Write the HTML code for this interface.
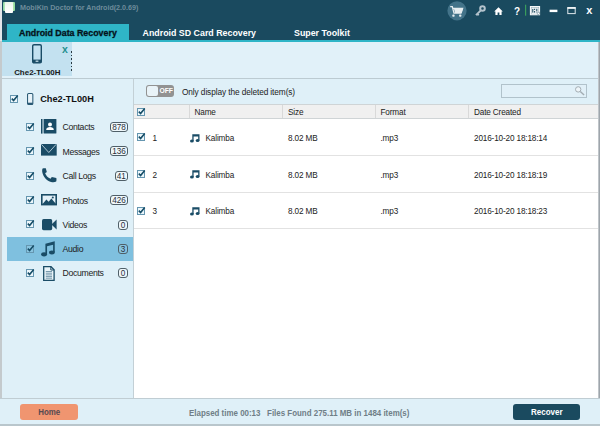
<!DOCTYPE html>
<html><head><meta charset="utf-8">
<style>
*{margin:0;padding:0;box-sizing:border-box}
html,body{width:600px;height:426px;overflow:hidden;background:#fff}
body{font-family:"Liberation Sans",sans-serif;font-size:8px;color:#222;position:relative}
.abs{position:absolute}
svg{position:absolute;overflow:visible}
#title{left:0;top:0;width:600px;height:40px;background:#1a4a5f}
#tabline{left:0;top:39.8px;width:600px;height:1.9px;background:#2fb5c7}
#ttext{left:20px;top:2.5px;font-size:7.15px;font-weight:bold;color:#6e8c9b;line-height:11px;white-space:nowrap}
#logo{left:3.1px;top:1.9px;width:12.1px;height:11.2px}#logo i{position:absolute;left:0;top:0;width:12.1px;height:9.4px;background:linear-gradient(to right,#86d6a0 0,#b9e8bd 16%,#e6f6e4 30%,#f4fbf2 50%,#dff3dd 70%,#a9e4ae 86%,#8fdc95 100%);border-radius:1px}#logo b{position:absolute;left:1.9px;top:0.4px;width:8.4px;height:10.8px;background:linear-gradient(to bottom,#eaf6e8 0,#f7fbf6 40%,#ffffff 100%);border-radius:1px}
.tab{top:24.5px;height:16px;font-size:8.85px;font-weight:bold;line-height:16px;color:#fff;white-space:nowrap}
#tab1{left:6.6px;top:23.7px;width:122.4px;height:17px;background:#2fb5c7}
#strip{left:0;top:41.6px;width:600px;height:36.4px;background:#e1f1f9}
#dev{left:1.5px;top:41.6px;width:70.5px;height:34.8px;background:#c3e1f0}
#devdots{left:71px;top:50.7px;height:20.2px;width:1.2px;background:repeating-linear-gradient(to bottom,#2a3a42 0,#2a3a42 1.8px,transparent 1.8px,transparent 3.67px)}
#devname{left:2px;top:68px;width:70.6px;text-align:center;font-size:7.95px;font-weight:bold;color:#1a1a1a;line-height:10px}
#devx{left:62px;top:43.3px;font-size:10.5px;font-weight:bold;color:#24908f;line-height:12px}
#stripline{left:0;top:78px;width:600px;height:1px;background:#bccbd2}
#side{left:1.3px;top:79px;width:131.7px;height:319px;background:#dff0f8}
#sideline{left:133px;top:79px;width:1px;height:319px;background:#c3d0d6}
#main{left:134px;top:79px;width:466px;height:25px;background:#dff0f8}
#bottom{left:0;top:398px;width:600px;height:28px;background:#dff0f8;border-top:1px solid #c0cdd3;border-bottom:2px solid #b9c6cc}
#lb{left:0;top:0;width:1.6px;height:426px;background:linear-gradient(to bottom,#e3e6ea 0,#e3e6ea 41px,#c4cacd 41px,#c4cacd 100%)}
#rb{left:597.6px;top:41.6px;width:2.4px;height:385px;background:linear-gradient(to right,#d5dadd,#a0a7ad 60%,#9aa1a7)}
.cb{width:8px;height:8px;border:1px solid #6596b0;background:#ebf6fb}
.item{left:62.6px;font-size:8.7px;letter-spacing:-0.33px;color:#222;line-height:10px;white-space:nowrap}
.cnt{height:10px;border:1px solid #4f5f68;border-radius:3px;font-size:8.2px;line-height:10px;text-align:center;color:#2a2f3a;background:#eef7fb;right:472px}
#sel{left:7.3px;top:236.8px;width:125.7px;height:23.9px;background:#7fc0df}
#thead{left:134px;top:104px;width:464px;height:15.2px;background:#f0f0f0;border-top:1px solid #cfd4d6;border-bottom:1px solid #cfd4d6}
.th{top:108.3px;font-size:8.2px;letter-spacing:-0.15px;line-height:10px;color:#222;white-space:nowrap}
.vsep{top:105px;width:1px;height:13px;background:#d9d9d9}
.td{font-size:8.2px;letter-spacing:-0.15px;line-height:10px;color:#222;white-space:nowrap}
.hl{left:134px;width:464px;height:1px;background:#e2e2e2}
#home{left:20px;top:404.2px;width:58px;height:15.8px;background:#f09570;border-radius:3px;font-size:8.8px;font-weight:bold;color:#584a50;text-align:center;line-height:17.6px}#home span{display:inline-block;transform:scaleX(0.9)}
#recover{left:513px;top:404.3px;width:66.7px;height:15.4px;background:#1a4a5f;border-radius:3px;font-size:8.5px;font-weight:bold;color:#fff;text-align:center;line-height:16.6px}#recover span{display:inline-block;transform:scaleX(0.94)}
#status{left:189px;top:408px;font-size:8.3px;font-weight:bold;color:#6f7e87;line-height:10px;white-space:pre;transform:scaleX(0.956);transform-origin:0 50%}
#toggle{left:145.5px;top:85px;width:28.5px;height:12px;background:#929292;border-radius:3px}
#knob{left:146.7px;top:86px;width:11.5px;height:10px;background:#e9f3f8;border-radius:2px}
#off{left:159.6px;top:87px;font-size:6.8px;letter-spacing:-0.2px;font-weight:bold;color:#fff;line-height:8px}
#only{left:182px;top:87.4px;font-size:8.3px;letter-spacing:-0.1px;line-height:10px;color:#222;white-space:nowrap}
#search{left:501px;top:84.3px;width:86px;height:14px;border:1px solid #b1c2cb;background:#e1f0f8}
.ic{fill:#1a4c66}
</style></head><body>
<div class="abs" id="title"></div>
<div class="abs" id="logo"><i></i><b></b></div>
<div class="abs" id="ttext">MobiKin Doctor for Android(2.0.69)</div>
<div class="abs tab" id="tab1"></div>
<div class="abs tab" style="left:19px;color:#04121a;-webkit-text-stroke:0.3px #04121a">Android Data Recovery</div>
<div class="abs tab" style="left:142.5px">Android SD Card Recovery</div>
<div class="abs tab" style="left:294px">Super Toolkit</div>
<div class="abs" id="tabline"></div>
<!-- title icons -->
<svg class="abs" style="left:0;top:0" width="600" height="24" viewBox="0 0 600 24">
<circle cx="457" cy="10.8" r="9.6" fill="#437389"/>
<path d="M450.2 6.700h2.100l1.700 6.500h7l1.600-4.800h-9.400" fill="none" stroke="#e6edf0" stroke-width="1.300"/>
<path d="M453.800 8.200h9.300l-1.500 4.700h-6.600z" fill="#e6edf0"/>
<rect x="452.300" y="14.600" width="2.300" height="2.100" rx="0.700" fill="#e6edf0"/><rect x="459.100" y="14.600" width="2.300" height="2.100" rx="0.700" fill="#e6edf0"/>
<circle cx="482.500" cy="8.500" r="2.300" fill="none" stroke="#b4c3cd" stroke-width="2"/>
<path d="M480.600 10.600l-4.600 4.500M477.400 13.900l1.300 1.300" stroke="#b4c3cd" stroke-width="2" fill="none"/>
<path d="M494.2 11.4l4.3-4.2 4.3 4.2h-1.2v3.6h-2.2v-2.4h-1.8v2.4h-2.2v-3.6z" fill="#fff"/>
<text x="514" y="15.200" font-size="10" font-weight="bold" fill="#fff" font-family="Liberation Sans, sans-serif">?</text>
<rect x="525" y="4.7" width="1.2" height="11" fill="#3a9c5c"/>
<rect x="531.200" y="7.300" width="7.600" height="6.800" fill="#e9eff2"/>
<path d="M532.800 9v3.600M534.600 8.800v1.200M534.600 11v1.600M536.800 8.800v2.600" stroke="#1a4a5f" stroke-width="1"/>
<rect x="530.500" y="6.600" width="9" height="8.100" fill="none" stroke="#f4f7f8" stroke-width="1.200"/>
<path d="M536.600 12.300h3.600l-1.800 3z" fill="#fff" stroke="#1a4a5f" stroke-width="0.400"/>
<rect x="549.6" y="9.7" width="7.8" height="2.4" fill="#fff"/>
<rect x="567.8" y="8" width="7.4" height="5.6" fill="none" stroke="#dfe7eb" stroke-width="1"/>
<rect x="567.3" y="7" width="8.4" height="1.8" fill="#eef2f4"/>
<text x="586.3" y="14.2" font-size="11" font-weight="bold" fill="#fff" font-family="Liberation Sans, sans-serif">x</text>
</svg>
<div class="abs" id="strip"></div>
<div class="abs" id="dev"></div>
<div class="abs" id="devdots"></div>
<div class="abs" id="devname">Che2-TL00H</div>
<div class="abs" id="devx">x</div>
<svg class="abs" style="left:32px;top:44px" width="10" height="20" viewBox="0 0 10 20">
<rect x="0.7" y="0.7" width="8.6" height="18.2" rx="1.3" fill="none" stroke="#1a4c66" stroke-width="1.4"/>
<rect x="0.7" y="15.6" width="8.6" height="3.3" fill="#1a4c66"/>
<rect x="3.6" y="16.6" width="2.8" height="1.2" fill="#cfe6f2"/>
</svg>
<div class="abs" id="stripline"></div>
<div class="abs" id="side"></div>
<div class="abs" id="sideline"></div>
<div class="abs" id="main"></div>
<div class="abs" id="sel"></div>
<div class="abs" id="lb"></div>
<div class="abs" id="rb"></div>
<div class="abs" id="thead"></div>
<!-- SIDEBAR -->
<div class="abs cb" style="left:10px;top:95px"></div>
<svg class="abs" style="left:26.600px;top:92.800px" width="6.400" height="12" viewBox="0 0 6.400 12"><rect x="0.550" y="0.550" width="5.300" height="10.900" rx="1" fill="#e9f4fa" stroke="#2a5a75" stroke-width="1.050"/><rect x="0.550" y="9.700" width="5.300" height="1.750" fill="#2a5a75"/></svg>
<div class="abs" style="left:40.200px;top:93.900px;font-size:9.200px;font-weight:bold;color:#111;line-height:11px;white-space:nowrap">Che2-TL00H</div>
<div class="abs cb" style="left:26px;top:123px;background:#ebf6fb"></div><svg class="abs" style="left:26px;top:122px" width="10" height="10" viewBox="0 0 10 10"><path d="M1.800 4.600L3.600 6.500L7.700 1.600" fill="none" stroke="#154c66" stroke-width="1.600"/></svg>
<svg class="abs" style="left:41px;top:118.9px" width="16" height="15" viewBox="0 0 16 15"><rect x="0" y="0" width="1.5" height="14.6" fill="#1a4c66"/><rect x="2.600" y="0" width="12.800" height="14.6" rx="0.6" fill="#1a4c66"/><circle cx="9" cy="5.4" r="2" fill="#fff"/><path d="M5.2 10.9c0-2 1.8-2.9 3.8-2.9s3.8 0.9 3.8 2.9z" fill="#fff"/></svg>
<div class="abs item" style="top:122.4px">Contacts</div>
<div class="abs cnt" style="top:122px;width:18px;background:#eef7fb">878</div>
<div class="abs cb" style="left:26px;top:147px;background:#ebf6fb"></div><svg class="abs" style="left:26px;top:146px" width="10" height="10" viewBox="0 0 10 10"><path d="M1.800 4.600L3.600 6.500L7.700 1.600" fill="none" stroke="#154c66" stroke-width="1.600"/></svg>
<svg class="abs" style="left:41px;top:144.20000000000002px" width="16" height="12" viewBox="0 0 16 12"><rect x="0" y="0" width="15.7" height="11.6" fill="#1a4c66"/><path d="M0.4 0.3l7.4 8.2 7.4-8.2" fill="none" stroke="#cfe2ec" stroke-width="0.8"/></svg>
<div class="abs item" style="top:146.8px">Messages</div>
<div class="abs cnt" style="top:146.4px;width:18px;background:#eef7fb">136</div>
<div class="abs cb" style="left:26px;top:172px;background:#ebf6fb"></div><svg class="abs" style="left:26px;top:171px" width="10" height="10" viewBox="0 0 10 10"><path d="M1.800 4.600L3.600 6.500L7.700 1.600" fill="none" stroke="#154c66" stroke-width="1.600"/></svg>
<svg class="abs" style="left:41.6px;top:168.39999999999998px" width="15" height="15" viewBox="0 0 15 15"><path d="M0.6 0.6c0.8-0.5 2.4-0.6 3.2-0.3l1 3.8c-0.5 0.5-1.2 0.9-1.7 1 0.8 2.6 2.7 4.6 5.5 5.6 0.3-0.7 0.8-1.4 1.3-1.7l4.4 0.9c0.3 1 0.3 2.6-0.1 3.6-1 0.7-2.6 0.9-4.1 0.7C5 13.200 1.300 9.300 0.300 4.300 0.100 3 0.100 1.500 0.600 0.600z" fill="#1a4c66"/></svg>
<div class="abs item" style="top:171.1px">Call Logs</div>
<div class="abs cnt" style="top:170.7px;width:13.5px;background:#eef7fb">41</div>
<div class="abs cb" style="left:26px;top:196px;background:#ebf6fb"></div><svg class="abs" style="left:26px;top:195px" width="10" height="10" viewBox="0 0 10 10"><path d="M1.800 4.600L3.600 6.500L7.700 1.600" fill="none" stroke="#154c66" stroke-width="1.600"/></svg>
<svg class="abs" style="left:41px;top:194.2px" width="17" height="12" viewBox="0 0 17 12"><rect x="0.8" y="0.8" width="14.4" height="9.8" fill="#e4f1f8" stroke="#1a4c66" stroke-width="1.6"/><path d="M1.6 10l3.800-4.600 2.200 2.400 2.800-3.400 4.600 5.600z" fill="#1a4c66"/><circle cx="11.8" cy="3.400" r="1" fill="#1a4c66"/></svg>
<div class="abs item" style="top:195.5px">Photos</div>
<div class="abs cnt" style="top:195.1px;width:18px;background:#eef7fb">426</div>
<div class="abs cb" style="left:26px;top:220px;background:#ebf6fb"></div><svg class="abs" style="left:26px;top:219px" width="10" height="10" viewBox="0 0 10 10"><path d="M1.800 4.600L3.600 6.500L7.700 1.600" fill="none" stroke="#154c66" stroke-width="1.600"/></svg>
<svg class="abs" style="left:42px;top:218.5px" width="15" height="12" viewBox="0 0 15 11" preserveAspectRatio="none"><rect x="0" y="0" width="10.2" height="10.2" rx="1.6" fill="#1a4c66"/><path d="M9.500 5.100l5.100-4.600v9.200z" fill="#1a4c66"/></svg>
<div class="abs item" style="top:219.9px">Videos</div>
<div class="abs cnt" style="top:219.5px;width:10px;background:#eef7fb">0</div>
<div class="abs cb" style="left:26px;top:245px;background:#88c4e0"></div><svg class="abs" style="left:26px;top:244px" width="10" height="10" viewBox="0 0 10 10"><path d="M1.800 4.600L3.600 6.500L7.700 1.600" fill="none" stroke="#154c66" stroke-width="1.600"/></svg>
<svg class="abs" style="left:41.3px;top:241.0px" width="14.3" height="15.4" viewBox="0 0 13 14"><path d="M4 2.400l8.500-2.200v10.300h-1.500v-7.200l-5.500 1.400v7.500h-1.500z" fill="#1a4c66"/><ellipse cx="2.800" cy="12.100" rx="2.700" ry="1.900" fill="#1a4c66"/><ellipse cx="9.900" cy="10.500" rx="2.600" ry="1.800" fill="#1a4c66"/></svg>
<div class="abs item" style="top:244.20000000000002px">Audio</div>
<div class="abs cnt" style="top:243.8px;width:10px;background:#86c4e1">3</div>
<div class="abs cb" style="left:26px;top:269px;background:#ebf6fb"></div><svg class="abs" style="left:26px;top:268px" width="10" height="10" viewBox="0 0 10 10"><path d="M1.800 4.600L3.600 6.500L7.700 1.600" fill="none" stroke="#154c66" stroke-width="1.600"/></svg>
<svg class="abs" style="left:43px;top:265.7px" width="12" height="15" viewBox="0 0 12 15"><path d="M0.700 0.700h7.300l3.100 3.100v10.500h-10.400z" fill="#e9f4f9" stroke="#1a4c66" stroke-width="1.300"/><path d="M7.800 0.700v3.300h3.300" fill="none" stroke="#1a4c66" stroke-width="1"/><path d="M2.800 5.500h6.200M2.800 7.200h6.200M2.800 8.900h6.200M2.800 10.600h6.200M2.800 12.200h6.200" stroke="#5b8399" stroke-width="0.800"/></svg>
<div class="abs item" style="top:268.2px">Documents</div>
<div class="abs cnt" style="top:268.2px;width:10px;background:#eef7fb">0</div>
<div class="abs cb" style="left:10px;top:95px;background:#ebf6fb"></div><svg class="abs" style="left:10px;top:94px" width="10" height="10" viewBox="0 0 10 10"><path d="M1.800 4.600L3.600 6.500L7.700 1.600" fill="none" stroke="#154c66" stroke-width="1.600"/></svg>
<div class="abs cb" style="left:137px;top:108px;background:#ebf6fb"></div><svg class="abs" style="left:137px;top:107px" width="10" height="10" viewBox="0 0 10 10"><path d="M1.800 4.600L3.600 6.500L7.700 1.600" fill="none" stroke="#154c66" stroke-width="1.600"/></svg>
<div class="abs vsep" style="left:189px"></div>
<div class="abs vsep" style="left:282px"></div>
<div class="abs vsep" style="left:375px"></div>
<div class="abs vsep" style="left:468px"></div>
<div class="abs th" style="left:194.5px">Name</div>
<div class="abs th" style="left:288px">Size</div>
<div class="abs th" style="left:380.5px">Format</div>
<div class="abs th" style="left:474px">Date Created</div>
<div class="abs cb" style="left:137px;top:133.3px;background:#ebf6fb"></div><svg class="abs" style="left:137px;top:132.3px" width="10" height="10" viewBox="0 0 10 10"><path d="M1.800 4.600L3.600 6.500L7.700 1.600" fill="none" stroke="#154c66" stroke-width="1.600"/></svg>
<div class="abs td" style="left:152.5px;top:134.0px">1</div>
<svg class="abs" style="left:189.7px;top:133.7px" width="10" height="9" viewBox="0 0 10 9"><path d="M2.300 0.300h7.200v6.200h-1.300v-4h-4.600v4.600h-1.300z" fill="#1a4c66"/><ellipse cx="1.900" cy="7" rx="1.900" ry="1.500" fill="#1a4c66"/><ellipse cx="7.600" cy="6.400" rx="1.900" ry="1.500" fill="#1a4c66"/></svg>
<div class="abs td" style="left:205.5px;top:134.0px">Kalimba</div>
<div class="abs td" style="left:288px;top:134.0px">8.02 MB</div>
<div class="abs td" style="left:380.5px;top:134.0px">.mp3</div>
<div class="abs td" style="left:474px;top:134.0px">2016-10-20 18:18:14</div>
<div class="abs cb" style="left:137px;top:170px;background:#ebf6fb"></div><svg class="abs" style="left:137px;top:169px" width="10" height="10" viewBox="0 0 10 10"><path d="M1.800 4.600L3.600 6.500L7.700 1.600" fill="none" stroke="#154c66" stroke-width="1.600"/></svg>
<div class="abs td" style="left:152.5px;top:170.5px">2</div>
<svg class="abs" style="left:189.7px;top:170.2px" width="10" height="9" viewBox="0 0 10 9"><path d="M2.300 0.300h7.200v6.200h-1.300v-4h-4.600v4.600h-1.300z" fill="#1a4c66"/><ellipse cx="1.900" cy="7" rx="1.900" ry="1.500" fill="#1a4c66"/><ellipse cx="7.600" cy="6.400" rx="1.900" ry="1.500" fill="#1a4c66"/></svg>
<div class="abs td" style="left:205.5px;top:170.5px">Kalimba</div>
<div class="abs td" style="left:288px;top:170.5px">8.02 MB</div>
<div class="abs td" style="left:380.5px;top:170.5px">.mp3</div>
<div class="abs td" style="left:474px;top:170.5px">2016-10-20 18:18:19</div>
<div class="abs cb" style="left:137px;top:206.6px;background:#ebf6fb"></div><svg class="abs" style="left:137px;top:205.6px" width="10" height="10" viewBox="0 0 10 10"><path d="M1.800 4.600L3.600 6.500L7.700 1.600" fill="none" stroke="#154c66" stroke-width="1.600"/></svg>
<div class="abs td" style="left:152.5px;top:207.3px">3</div>
<svg class="abs" style="left:189.7px;top:207px" width="10" height="9" viewBox="0 0 10 9"><path d="M2.300 0.300h7.200v6.200h-1.300v-4h-4.600v4.600h-1.300z" fill="#1a4c66"/><ellipse cx="1.900" cy="7" rx="1.900" ry="1.500" fill="#1a4c66"/><ellipse cx="7.600" cy="6.400" rx="1.900" ry="1.500" fill="#1a4c66"/></svg>
<div class="abs td" style="left:205.5px;top:207.3px">Kalimba</div>
<div class="abs td" style="left:288px;top:207.3px">8.02 MB</div>
<div class="abs td" style="left:380.5px;top:207.3px">.mp3</div>
<div class="abs td" style="left:474px;top:207.3px">2016-10-20 18:18:23</div>
<div class="abs hl" style="top:155.4px"></div>
<div class="abs hl" style="top:191.9px"></div>
<div class="abs hl" style="top:228.1px"></div>
<div class="abs" id="bottom"></div>
<div class="abs" id="home"><span>Home</span></div>
<div class="abs" id="recover"><span>Recover</span></div>
<div class="abs" id="status">Elapsed time 00:13   Files Found 275.11 MB in 1484 item(s)</div>
<div class="abs" id="toggle"></div><div class="abs" id="knob"></div><div class="abs" id="off">OFF</div>
<div class="abs" id="only">Only display the deleted item(s)</div>
<div class="abs" id="search"></div>
<svg class="abs" style="left:570px;top:84px" width="20" height="14" viewBox="570 84 20 14"><circle cx="578.2" cy="89.4" r="2.7" fill="#eef5f9" stroke="#a3adb3" stroke-width="1"/><path d="M580.3 91.5l3.8 3.6" stroke="#a3adb3" stroke-width="1.4"/></svg>
</body></html>
